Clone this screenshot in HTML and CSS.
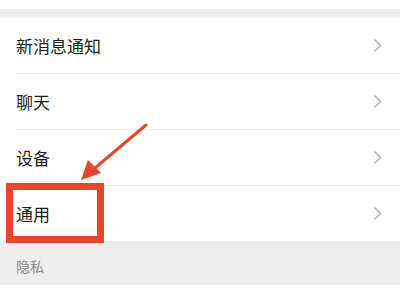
FILE: index.html
```html
<!DOCTYPE html>
<html lang="zh">
<head>
<meta charset="utf-8">
<link rel="stylesheet" href="styles.css">
</head>
<body>
<div class="screen">
  <div class="topstrip"></div>
  <div class="band"></div>
  <ul class="list">
    <li class="row"><span class="label">新消息通知</span><svg class="chev" viewBox="0 0 9 15"><path d="M1.5 1.5 L7.5 7.5 L1.5 13.5" /></svg></li>
    <li class="row"><span class="label">聊天</span><svg class="chev" viewBox="0 0 9 15"><path d="M1.5 1.5 L7.5 7.5 L1.5 13.5" /></svg></li>
    <li class="row"><span class="label">设备</span><svg class="chev" viewBox="0 0 9 15"><path d="M1.5 1.5 L7.5 7.5 L1.5 13.5" /></svg></li>
    <li class="row last"><span class="label">通用</span><svg class="chev" viewBox="0 0 9 15"><path d="M1.5 1.5 L7.5 7.5 L1.5 13.5" /></svg></li>
  </ul>
  <div class="section">隐私</div>
  <div class="bottom"></div>
  <svg class="annot" viewBox="0 0 400 290" width="400" height="290">
    <rect x="9.5" y="186.5" width="91" height="53" fill="none" stroke="#e2482b" stroke-width="7"/>
    <line x1="146" y1="125" x2="95" y2="168" stroke="#e2482b" stroke-width="3" stroke-linecap="round"/>
    <polygon points="81,180 88,160 101,173" fill="#e2482b"/>
  </svg>
</div>
</body>
</html>
```
FILE: styles.css
```css
* { box-sizing: border-box; margin: 0; padding: 0; }
html, body { width: 400px; height: 290px; overflow: hidden; background: #fff; }
body { font-family: "Noto Sans CJK SC", "Noto Sans", sans-serif; }
.screen { position: relative; width: 400px; height: 290px; display: flex; flex-direction: column; }
.topstrip { height: 9px; background: #fff; }
.band { height: 9px; background: #efefef; }
.list { list-style: none; background: #fff; }
.row {
  height: 56px;
  display: flex;
  align-items: center;
  justify-content: space-between;
  margin-left: 16px;
  padding-right: 18px;
  border-bottom: 1px solid #ededed;
}
.row.last { border-bottom: none; height: 55px; }
.label { font-size: 17px; color: #1b1b1b; line-height: 1; }
.chev { width: 9px; height: 15px; fill: none; stroke: #b3b3b3; stroke-width: 1.5; }
.section {
  height: 44px;
  background: #ededed;
  color: #8a8a8a;
  font-size: 14px;
  padding-left: 16px;
  padding-top: 18px;
  line-height: 1;
}
.bottom { flex: 1; background: #fff; }
.annot { position: absolute; left: 0; top: 0; }
```
